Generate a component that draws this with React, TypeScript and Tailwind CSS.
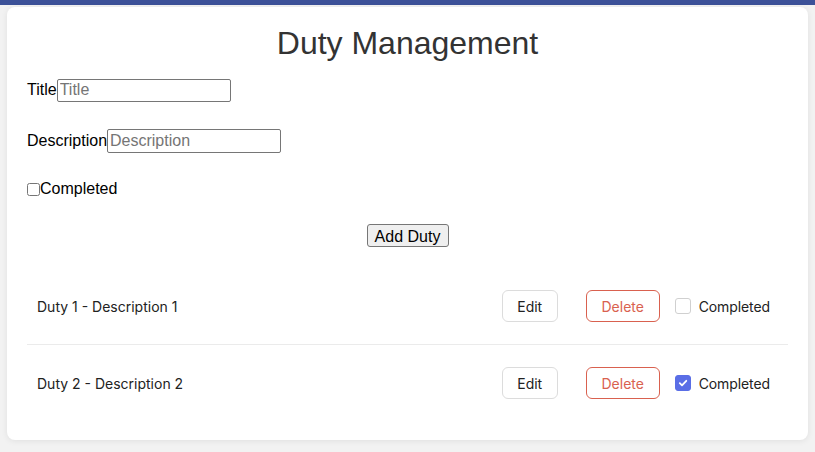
import React, { useState } from "react";

interface Duty {
  id: number;
  title: string;
  description: string;
  completed: boolean;
}

const DutyRow: React.FC<{ duty: Duty; last: boolean; onToggle: () => void }> = ({ duty, last, onToggle }) => {
  return (
    <div
      className={`flex items-center py-[22px] pl-[10px] pr-[18px] ${last ? "" : "border-b border-[#ebebeb]"}`}
      style={{ fontFamily: "Inter, 'Noto Sans', sans-serif" }}
    >
      <span className="flex-1 text-[14px] text-[#222]">
        {duty.title} - {duty.description}
      </span>
      <button className="h-[32px] w-[56px] rounded-[6px] border border-[#dcdcdc] bg-white text-[14px] text-[#222]">
        Edit
      </button>
      <button className="ml-[28px] h-[32px] w-[74px] rounded-[6px] border border-[#d9614f] bg-white text-[14px] text-[#d9614f]">
        Delete
      </button>
      <label className="ml-[15px] flex items-center gap-[8px] text-[14px] tracking-[-0.1px] text-[#222]">
        <span
          onClick={onToggle}
          className={`flex h-[16px] w-[16px] items-center justify-center rounded-[3px] border ${
            duty.completed ? "border-[#5a6ee6] bg-[#5a6ee6]" : "border-[#d0d0d0] bg-white"
          }`}
        >
          {duty.completed && (
            <svg width="10" height="10" viewBox="0 0 10 10">
              <path d="M1.8 5.2 L4 7.3 L8.3 2.8" fill="none" stroke="white" strokeWidth="1.8" strokeLinecap="round" strokeLinejoin="round" />
            </svg>
          )}
        </span>
        Completed
      </label>
    </div>
  );
};

export default function App() {
  const [duties, setDuties] = useState<Duty[]>([
    { id: 1, title: "Duty 1", description: "Description 1", completed: false },
    { id: 2, title: "Duty 2", description: "Description 2", completed: true },
  ]);

  const toggle = (id: number) =>
    setDuties(duties.map((d) => (d.id === id ? { ...d, completed: !d.completed } : d)));

  return (
    <div className="min-h-[452px] bg-[#f2f2f2]" style={{ fontFamily: "'Liberation Sans', Arial, sans-serif" }}>
      {/* top bar */}
      <div className="h-[5px] bg-[#3c5198]" />

      <div className="mx-[7px] mt-[2px] rounded-[8px] bg-white px-[20px] pt-[18px] pb-[19px] shadow-[0_1px_6px_rgba(0,0,0,0.08)]">
        <h1 className="text-center text-[32px] leading-[37px] text-[#333]">Duty Management</h1>

        <form className="mt-[16px] text-[16px] text-black" onSubmit={(e) => e.preventDefault()}>
          <div className="flex items-center">
            <label>Title</label>
            <input
              placeholder="Title"
              className="h-[23px] w-[174px] rounded-[2px] border border-[#767676] px-[2px] text-[16px] placeholder:text-[#757575]"
            />
          </div>
          <div className="mt-[27px] flex items-center">
            <label>Description</label>
            <input
              placeholder="Description"
              className="h-[24px] w-[174px] rounded-[2px] border border-[#767676] px-[2px] text-[16px] placeholder:text-[#757575]"
            />
          </div>
          <div className="mt-[24px] flex items-center">
            <input type="checkbox" className="m-0 h-[13px] w-[13px]" />
            <label>Completed</label>
          </div>
          <div className="mt-[23px] flex justify-center">
            <button
              type="submit"
              className="h-[23px] w-[82px] rounded-[3px] border border-[#767676] bg-[#efefef] text-[16px] text-black"
            >
              Add Duty
            </button>
          </div>
        </form>

        <div className="mt-[21px]">
          {duties.map((d, i) => (
            <DutyRow key={d.id} duty={d} last={i === duties.length - 1} onToggle={() => toggle(d.id)} />
          ))}
        </div>
      </div>
    </div>
  );
}
